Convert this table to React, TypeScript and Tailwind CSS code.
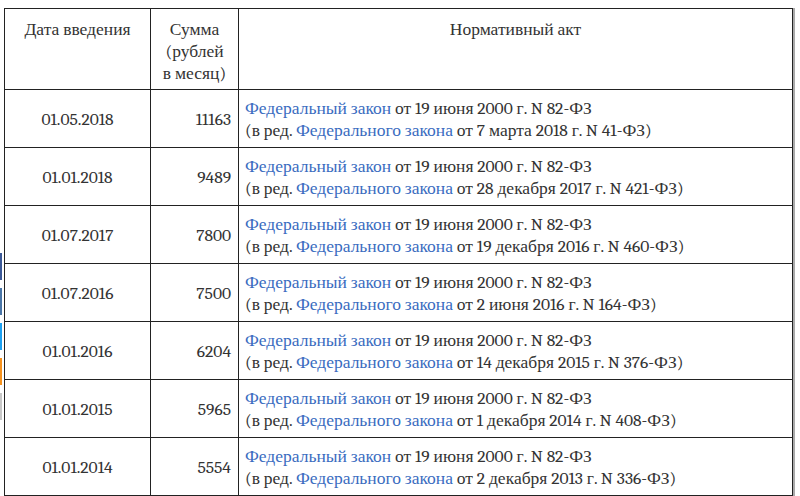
import React from 'react';

interface Row {
  date: string;
  sum: string;
  amend: string;
}

const rows: Row[] = [
  { date: '01.05.2018', sum: '11163', amend: 'от 7 марта 2018 г. N 41-ФЗ)' },
  { date: '01.01.2018', sum: '9489', amend: 'от 28 декабря 2017 г. N 421-ФЗ)' },
  { date: '01.07.2017', sum: '7800', amend: 'от 19 декабря 2016 г. N 460-ФЗ)' },
  { date: '01.07.2016', sum: '7500', amend: 'от 2 июня 2016 г. N 164-ФЗ)' },
  { date: '01.01.2016', sum: '6204', amend: 'от 14 декабря 2015 г. N 376-ФЗ)' },
  { date: '01.01.2015', sum: '5965', amend: 'от 1 декабря 2014 г. N 408-ФЗ)' },
  { date: '01.01.2014', sum: '5554', amend: 'от 2 декабря 2013 г. N 336-ФЗ)' },
];

const share = ['bg-[#3b5998]', 'bg-[#4a76a8]', 'bg-[#1da1f2]', 'bg-[#f7931e]', 'bg-[#c8c8c8]'];

const cell = 'border border-[#222] font-serif';

export default function App() {
  return (
    <div className="relative h-[496px] w-[800px] overflow-hidden bg-white font-serif text-[17.5px] leading-[22px] text-[#333]">
      {/* share buttons, cut off at the left edge */}
      <div className="absolute left-0 top-[253px] flex flex-col gap-[8px]">
        {share.map((c, i) => (
          <div key={i} className={`h-[27px] w-[2px] ${c}`} />
        ))}
      </div>

      <div className="pl-[4px] pt-[8px]">
        <table className="w-[789px] table-fixed border-collapse font-serif text-[17.5px] leading-[22px] shadow-[2px_0_0_#aaa]">
          <colgroup>
            <col className="w-[146px]" />
            <col className="w-[88px]" />
            <col />
          </colgroup>
          <thead>
            <tr className="h-[81px]">
              <th className={`${cell} px-[6px] pt-[9px] align-top font-normal`}>Дата введения</th>
              <th className={`${cell} px-[4px] pt-[9px] align-top font-normal`}>
                Сумма
                <br />
                (рублей
                <br />в месяц)
              </th>
              <th className={`${cell} px-[6px] pt-[9px] align-top font-normal`}>Нормативный акт</th>
            </tr>
          </thead>
          <tbody>
            {rows.map((r) => (
              <tr key={r.date} className="h-[58px]">
                <td className={`${cell} px-[6px] text-center`}>{r.date}</td>
                <td className={`${cell} pl-[6px] pr-[7px] text-right`}>{r.sum}</td>
                <td className={`${cell} pl-[6px] pr-[6px]`}>
                  <div>
                    <span className="text-[#3a6cbf]">Федеральный закон</span> от 19 июня 2000 г. N 82-ФЗ
                  </div>
                  <div>
                    (в ред. <span className="text-[#3a6cbf]">Федерального закона</span> {r.amend}
                  </div>
                </td>
              </tr>
            ))}
          </tbody>
        </table>
      </div>
    </div>
  );
}
